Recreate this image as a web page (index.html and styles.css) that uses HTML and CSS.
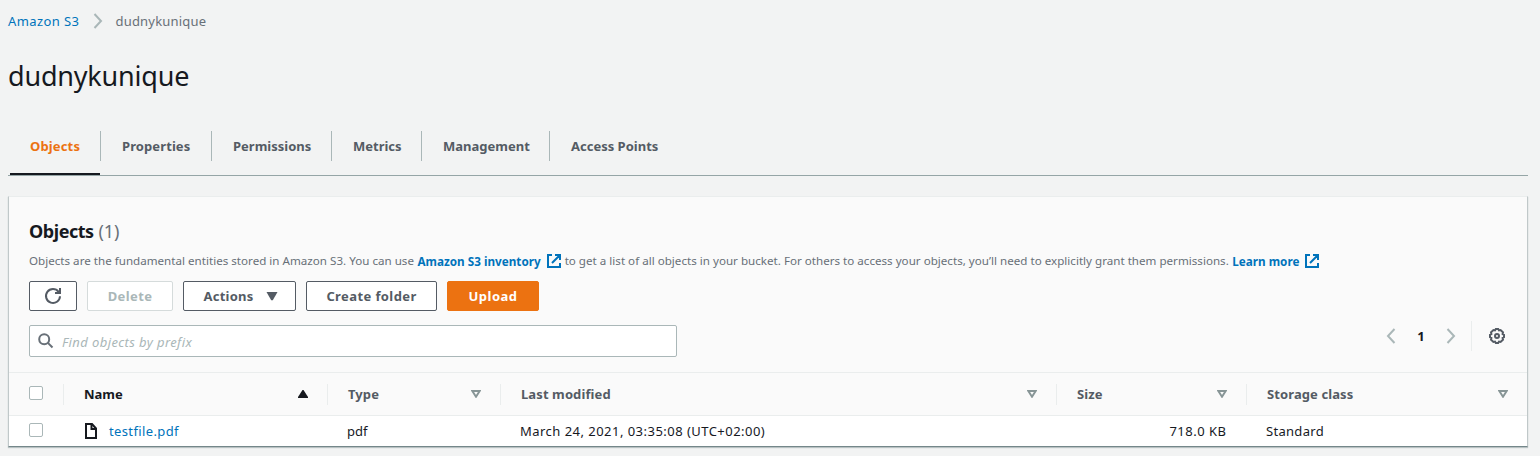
FILE: index.html
```html
<!DOCTYPE html>
<html lang="en">
<head>
<meta charset="utf-8">
<title>dudnykunique - S3 bucket</title>
<link rel="stylesheet" href="styles.css">
</head>
<body>
<nav class="breadcrumb">
  <a class="link crumb-root" href="#">Amazon S3</a>
  <svg class="crumb-arrow" width="10" height="16" viewBox="0 0 10 16"><path d="M1.500 1L8 8l-6.500 7"/></svg>
  <span class="crumb-current">dudnykunique</span>
</nav>
<h1 class="title"><span>dudnykunique</span></h1>
<div class="tabs">
  <a class="tab tab-objects active"><span>Objects</span></a>
  <a class="tab tab-properties"><span>Properties</span></a>
  <a class="tab tab-permissions"><span>Permissions</span></a>
  <a class="tab tab-metrics"><span>Metrics</span></a>
  <a class="tab tab-management"><span>Management</span></a>
  <a class="tab tab-access"><span>Access Points</span></a>
</div>
<main class="panel">
  <header class="panel-head">
    <h2 class="heading"><span class="heading-name">Objects</span> <span class="count">(1)</span></h2>
    <p class="description">
      <span class="d1">Objects are the fundamental entities stored in Amazon S3. You can use</span>
      <a class="link strong l1" href="#">Amazon S3 inventory</a>
      <svg class="external" width="14" height="14" viewBox="0 0 14 14"><path d="M5 1H1v12h12V9M8 1h5v5M13 1L5 9"/></svg>
      <span class="d2">to get a list of all objects in your bucket. For others to access your objects, you’ll need to explicitly grant them permissions.</span>
      <a class="link strong l2" href="#">Learn more</a>
      <svg class="external" width="14" height="14" viewBox="0 0 14 14"><path d="M5 1H1v12h12V9M8 1h5v5M13 1L5 9"/></svg>
    </p>
    <div class="actions">
      <button class="btn btn-refresh" aria-label="Refresh"><svg width="18" height="18" viewBox="0 0 18 18"><path d="M16 9.200A7 7 0 1 1 14.600 4.800L16 6M11 6h5V1"/></svg></button>
      <button class="btn btn-delete" disabled><span>Delete</span></button>
      <button class="btn btn-actions"><span>Actions</span><svg class="caret" width="12" height="9" viewBox="0 0 12 9"><path d="M.5 0h11L6.800 8.200H5.200z"/></svg></button>
      <button class="btn btn-create"><span>Create folder</span></button>
      <button class="btn btn-upload"><span>Upload</span></button>
    </div>
    <div class="tools">
      <div class="search">
        <svg width="16" height="16" viewBox="0 0 16 16"><circle cx="6.200" cy="6.200" r="5"/><path d="M9.900 9.900l4.600 4.600"/></svg>
        <span>Find objects by prefix</span>
      </div>
      <div class="pager">
        <svg class="arrow" width="10" height="16" viewBox="0 0 10 16"><path d="M8.500 1L2 8l6.500 7"/></svg>
        <b>1</b>
        <svg class="arrow" width="10" height="16" viewBox="0 0 10 16"><path d="M1.500 1L8 8l-6.500 7"/></svg>
        <div class="gear">
          <svg width="16" height="16" viewBox="0 0 16 16"><path d="M6.800 1h2.400l.8 1.400 1.600-.4L14 4.400 13.600 6l1.400.8v2.400l-1.400.8.400 1.600-2.400 2.400-1.600-.4-.8 1.400H6.800L6 13.600l-1.600.4L2 11.600l.4-1.600L1 9.200V6.800L2.400 6 2 4.400 4.400 2l1.600.4z"/><circle cx="8" cy="8" r="2"/></svg>
        </div>
      </div>
    </div>
  </header>
  <div class="row table-head">
    <div class="cell"><i class="check"></i></div>
    <div class="cell sorted"><span class="h-name">Name</span><svg width="10" height="8" viewBox="0 0 10 8"><path class="solid" d="M4.500 0h1L10 7v1H0V7z"/></svg></div>
    <div class="cell"><span class="h-text">Type</span><svg width="10" height="8" viewBox="0 0 10 8"><path d="M1.300 1h7.400L5 6.700z"/></svg></div>
    <div class="cell"><span class="h-text">Last modified</span><svg width="10" height="8" viewBox="0 0 10 8"><path d="M1.300 1h7.400L5 6.700z"/></svg></div>
    <div class="cell"><span class="h-text">Size</span><svg width="10" height="8" viewBox="0 0 10 8"><path d="M1.300 1h7.400L5 6.700z"/></svg></div>
    <div class="cell"><span class="h-text">Storage class</span><svg width="10" height="8" viewBox="0 0 10 8"><path d="M1.300 1h7.400L5 6.700z"/></svg></div>
  </div>
  <div class="row table-row">
    <div class="cell"><i class="check"></i></div>
    <div class="cell"><svg class="file" width="12" height="16" viewBox="0 0 12 16"><path d="M1 1h6l4 4.500V15H1z"/><path d="M6.500 1v5H11"/></svg><a class="link v-name" href="#">testfile.pdf</a></div>
    <div class="cell"><span class="v-type">pdf</span></div>
    <div class="cell"><span class="v-modified">March 24, 2021, 03:35:08 (UTC+02:00)</span></div>
    <div class="cell number"><span class="v-size">718.0 KB</span></div>
    <div class="cell"><span class="v-class">Standard</span></div>
  </div>
</main>
</body>
</html>
```
FILE: styles.css
```css
* { box-sizing: border-box; }
body {
  margin: 0;
  padding: 0 12px 0 8px;
  height: 456px;
  overflow: hidden;
  background: #f2f3f3;
  color: #16191f;
  font: 13px/20px "Noto Sans", sans-serif;
}
svg { display: block; flex: none; fill: none; }
.link { color: #0073bb; text-decoration: none; }
.breadcrumb { display: flex; align-items: center; height: 42px; white-space: nowrap; }
.crumb-root { width: 71px; letter-spacing: .4px; }
.crumb-arrow { margin: 0 12.5px 0 14px; stroke: #aab7b8; stroke-width: 2; }
.crumb-current { color: #687078; letter-spacing: .2px; }
.title { margin: 0; height: 68px; font-size: 27px; line-height: 67px; font-weight: 400; letter-spacing: -.2px; }
.tabs { display: flex; height: 66px; padding-left: 2px; border-bottom: 1px solid #95a5a6; }
.tab {
  display: flex;
  align-items: flex-start;
  padding: 26px 0 0 21px;
  height: 65px;
  color: #545b64;
  font-weight: 700;
  white-space: nowrap;
}
.tab::after { content: ""; width: 1px; height: 30px; margin: -5px 0 0 auto; background: #aab7b8; }
.tab:last-child::after { display: none; }
.tab-objects { width: 91px; padding-left: 20px; background: linear-gradient(#16191f, #16191f) 0 100% / 90px 2px no-repeat; color: #ec7211; letter-spacing: .15px; }
.tab-properties { width: 111px; letter-spacing: .1px; }
.tab-permissions { width: 120px; }
.tab-metrics { width: 90px; }
.tab-management { width: 128px; }
.panel {
  margin-top: 20px;
  height: 251px;
  background: #fff;
  border: 1px solid #c0c8c9;
  border-top-color: #eaeded;
  border-bottom-color: #74878a;
  box-shadow: 0 1px 1px #b9c2c3;
}
.panel-head { height: 175px; padding: 23px 20px 0; background: #fafafa; }
.heading { margin: 0; height: 24px; font-size: 18px; line-height: 22px; font-weight: 700; }
.heading-name { letter-spacing: -.45px; }
.count { color: #687078; font-weight: 400; }
.description { display: flex; align-items: center; margin: 7px 0 0; height: 20px; color: #687078; font-size: 11.6px; letter-spacing: .01px; white-space: nowrap; }
.strong { margin-left: 3.5px; font-size: 11.7px; font-weight: 700; }
.external { margin: 0 4px 0 6px; stroke: #0073bb; stroke-width: 2; }
.description .external { margin-top: -1px; }
.actions { display: flex; gap: 10px; margin-top: 10px; }
.btn {
  display: flex;
  align-items: center;
  justify-content: center;
  height: 30px;
  padding: 0;
  border: 1px solid #545b64;
  border-radius: 2px;
  background: #fff;
  color: #545b64;
  font: 700 13px/20px "Noto Sans", sans-serif;
  letter-spacing: .4px;
  white-space: nowrap;
}
.btn-refresh { width: 48px; }
.btn-refresh svg { stroke: #545b64; stroke-width: 2; }
.btn-delete { width: 86px; border-color: #d5dbdb; color: #aab7b8; }
.btn-actions { width: 113px; gap: 12px; padding-left: 2px; letter-spacing: .25px; }
.caret { fill: #545b64; }
.btn-create { width: 131px; }
.btn-upload { width: 92px; border-color: #ec7211; background: #ec7211; color: #fff; letter-spacing: .5px; }
.tools { display: flex; justify-content: space-between; margin-top: 14px; }
.search {
  display: flex;
  align-items: center;
  width: 648px;
  height: 32px;
  padding-left: 8px;
  border: 1px solid #aab7b8;
  border-radius: 2px;
  background: #fff;
  color: #aab7b8;
  font-style: italic;
  letter-spacing: .4px;
}
.search svg { margin-right: 8px; stroke: #687078; stroke-width: 2; }
.search span { padding-top: 2px; }
.pager { display: flex; align-items: center; height: 30px; margin-top: -4px; }
.arrow { stroke: #aab7b8; stroke-width: 2; }
.pager b { width: 50px; text-align: center; }
.gear { display: flex; align-items: center; height: 30px; margin-left: 15px; padding: 0 2px 0 17px; border-left: 1px solid #eaeded; }
.gear svg { stroke: #545b64; stroke-width: 2; }
.row { display: grid; grid-template-columns: 54px 264px 173px 556px 190px 281px; }
.cell { display: flex; align-items: center; padding-left: 20px; white-space: nowrap; }
.table-head { height: 44px; padding: 0; align-items: center; background: #fafafa; border: solid #eaeded; border-width: 1px 0; color: #545b64; font-weight: 700; }
.table-head .cell { height: 21px; padding-right: 19px; border-right: 1px solid #eaeded; }
.table-head .cell:first-child { width: 55px; }
.table-head .cell:nth-child(2) { padding-left: 21px; }
.table-head .cell:nth-child(n+2) { width: calc(100% + 1px); }
.table-head .cell:nth-child(n+3) { padding-left: 21px; }
.table-head .cell:last-child { padding-right: 20px; border: 0; }
.table-head svg { margin-left: auto; stroke: #879596; stroke-width: 2; }
.table-head .check { margin-top: -2px; }
.h-text { letter-spacing: .1px; }
.sorted { color: #16191f; }
.table-head .solid { fill: #16191f; stroke: none; }
.table-row { height: 30px; }
.table-row .check { margin-top: -2px; }
.check { width: 14px; height: 14px; border: 1px solid #aab7b8; border-radius: 2px; background: #fff; }
.file { margin: 0 12px 0 2px; stroke: #16191f; stroke-width: 2; }
.v-name { letter-spacing: .37px; }
.v-modified { letter-spacing: .47px; }
.v-size { margin-right: -.5px; letter-spacing: .5px; }
.v-class { letter-spacing: .3px; }
.number { justify-content: flex-end; padding-right: 20px; }
```
